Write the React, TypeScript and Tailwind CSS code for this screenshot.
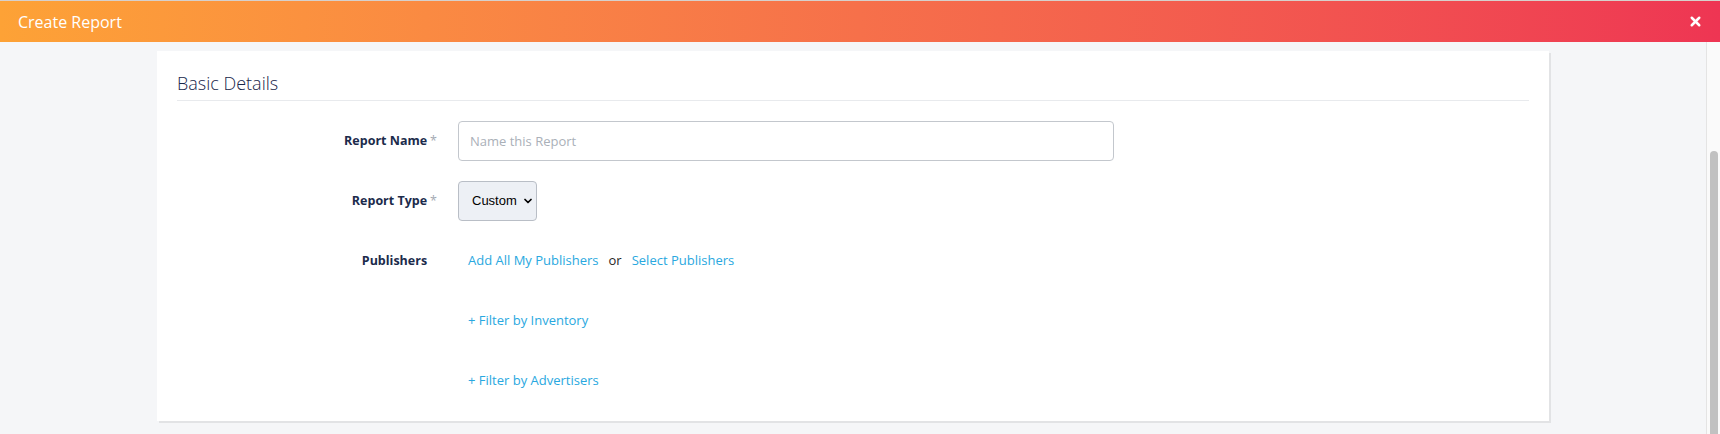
import { ChevronDown, X } from 'lucide-react';

const font = { fontFamily: '"Open Sans", "Noto Sans", sans-serif' };

function FormRow({ label, required, children }: { label: string; required?: boolean; children: React.ReactNode }) {
  return (
    <div className="flex items-center h-10 mt-5 first:mt-0">
      <div className="w-[260px] shrink-0 text-right text-[12.5px] font-bold text-[#1b2b4b]">
        {label}
        <span className={required ? 'ml-[3px] font-normal text-[#a4aab3]' : 'ml-[3px] font-normal invisible'}>*</span>
      </div>
      <div className="ml-[21px] flex items-center h-full">{children}</div>
    </div>
  );
}

export default function App() {
  return (
    <div className="w-[1720px] h-[434px] overflow-hidden flex flex-col bg-[#f5f6f8]" style={font}>
      {/* Header */}
      <header className="h-[42px] shrink-0 flex items-center justify-between bg-gradient-to-r from-[#fda236] via-[#f6704a] to-[#ee3553] border-t border-[#d6d0cc]">
        <span className="pl-[18px] text-[16px] text-white">Create Report</span>
        <button className="mr-[17px] text-white">
          <X className="w-[15px] h-[15px]" strokeWidth={4} />
        </button>
      </header>

      <div className="flex flex-1 min-h-0">
        {/* Main content */}
        <main className="flex-1 pt-[9px] px-[157px]">
          <section className="bg-white shadow-[2px_2px_0_#e2e3e5] px-5 pt-5 pb-5">
            <h2 className="text-[18px] font-light leading-6 text-[#17264a] pb-[5px] border-b border-[#e8eaed]">
              Basic Details
            </h2>

            <div className="mt-5">
              <FormRow label="Report Name" required>
                <input
                  type="text"
                  placeholder="Name this Report"
                  className="w-[656px] h-10 px-[11px] text-[13px] border border-[#c3c7cd] rounded placeholder:text-[#aab0b8] outline-none"
                />
              </FormRow>

              <FormRow label="Report Type" required>
                <div
                  className="h-10 w-[79px] flex items-center pl-[13px] gap-[5px] bg-[#edf0f5] border border-[#b9bec6] rounded text-[13px] text-black"
                  style={{ fontFamily: '"Liberation Sans", Arial, sans-serif' }}
                >
                  Custom
                  <ChevronDown className="w-3 h-3" strokeWidth={3.5} />
                </div>
              </FormRow>

              <FormRow label="Publishers">
                <div className="pl-[10px] flex items-center gap-[10px] text-[13px]">
                  <a className="text-[#29a8e0]">Add All My Publishers</a>
                  <span className="text-[#1f1f1f]">or</span>
                  <a className="text-[#29a8e0]">Select Publishers</a>
                </div>
              </FormRow>

              <FormRow label="">
                <a className="pl-[10px] text-[13px] text-[#29a8e0]">+ Filter by Inventory</a>
              </FormRow>

              <FormRow label="">
                <a className="pl-[10px] text-[13px] text-[#29a8e0]">+ Filter by Advertisers</a>
              </FormRow>
            </div>
          </section>
        </main>

        {/* Scrollbar */}
        <div className="w-[14px] shrink-0 bg-[#fafafa] border-l border-[#e4e4e4] pt-[109px] pl-[3px]">
          <div className="w-[8px] h-full bg-[#c1c1c1] rounded-t-full" />
        </div>
      </div>
    </div>
  );
}
